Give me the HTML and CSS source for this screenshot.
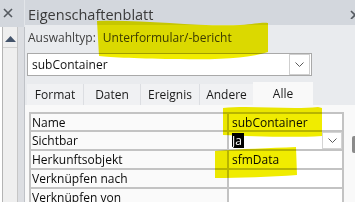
FILE: index.html
```html
<!DOCTYPE html>
<html lang="de">
<head>
<meta charset="utf-8">
<title>Eigenschaftenblatt</title>
<link rel="stylesheet" href="styles.css">
</head>
<body>
<div class="app">
  <div class="side">
    <div class="side-title">
      <svg class="x-icon" width="10" height="10" viewBox="0 0 10 10"><path d="M1 1 L9 9 M9 1 L1 9" stroke="#555a60" stroke-width="1.6" fill="none"/></svg>
    </div>
    <div class="side-body">
      <div class="side-edge"></div>
      <div class="vscroll">
        <div class="vs-btn">
          <svg width="11" height="6" viewBox="0 0 11 6"><path d="M0 6 L5.5 0 L11 6 Z" fill="#44546b"/></svg>
        </div>
      </div>
      <div class="side-gap"></div>
    </div>
  </div>
  <div class="sheet">
    <div class="titlebar">
      <span>Eigenschaftenblatt</span>
      <svg class="close" width="8" height="9" viewBox="0 0 8 9"><path d="M1 1 L9 9 M9 1 L1 9" stroke="#555a60" stroke-width="1.6" fill="none"/></svg>
    </div>
    <div class="seltype"><span>Auswahltyp:</span><span>Unterformular/-bericht</span></div>
    <div class="combo">
      <span>subContainer</span>
      <span class="drop"><svg width="9" height="5" viewBox="0 0 9 5"><polyline points="0.5,0.5 4.5,4.5 8.5,0.5" stroke="#5a5a5a" stroke-width="1" fill="none"/></svg></span>
    </div>
    <div class="tabs">
      <div class="tab w1">Format</div>
      <div class="tab w2">Daten</div>
      <div class="tab w3">Ereignis</div>
      <div class="tab w4">Andere</div>
      <div class="tab active w5">Alle</div>
    </div>
    <div class="content">
      <div class="grid">
        <div class="k">Name</div><div class="v">subContainer</div>
        <div class="k">Sichtbar</div>
        <div class="v sel"><span class="hl">Ja</span><span class="cdrop"><svg width="9" height="5" viewBox="0 0 9 5"><polyline points="0.5,0.5 4.5,4.5 8.5,0.5" stroke="#5a5a5a" stroke-width="1" fill="none"/></svg></span></div>
        <div class="k">Herkunftsobjekt</div><div class="v">sfmData</div>
        <div class="k">Verknüpfen nach</div><div class="v"></div>
        <div class="k">Verknüpfen von</div><div class="v"></div>
      </div>
      <div class="rscroll"></div>
    </div>
  </div>
</div>
<svg class="marks" width="355" height="202" viewBox="0 0 355 202">
  <path d="M97 21 C140 19 200 27 240 25 C255 24 262 22 268 23 L268 52 C250 58 220 60 180 59 C140 59 110 57 99 56 Z" fill="#f0ec00"/>
  <path d="M223 108 C250 105 290 110 318 107 L322 108 L322 136 C290 138 250 136 223 135 Z" fill="#f0ec00"/>
  <path d="M215 151 C240 149 270 148 296 147 L297 175 C270 177 240 178 215 178 Z" fill="#f0ec00"/>
</svg>
</body>
</html>
```
FILE: styles.css
```css
* { box-sizing: border-box; margin: 0; padding: 0; }
html, body { width: 355px; height: 202px; overflow: hidden; }
body {
  font-family: "Open Sans", "Noto Sans", sans-serif;
  font-size: 12px;
  color: #1a1a1a;
  background: #e9ebee;
  position: relative;
}
.app { display: flex; height: 202px; }

.side { width: 25px; flex: none; display: flex; flex-direction: column; }
.side-title { height: 27px; background: #d3d7dd; padding: 8px 0 0 3px; border-right: 1px solid #e2e5e9; }
.x-icon { display: block; }
.side-body { flex: 1; display: flex; }
.side-edge { width: 2px; background: #ffffff; }
.vscroll { width: 16px; background: #efefef; border-left: 1px solid #b4b4b4; border-right: 1px solid #c6c6c6; }
.vs-btn { height: 21px; border-bottom: 1px solid #d2d2d2; display: flex; justify-content: center; padding-top: 9px; }
.vs-btn svg { display: block; }
.side-gap { width: 7px; background: #dcdee2; border-right: 1px solid #bfc2c7; }

.sheet { flex: 1; min-width: 0; display: flex; flex-direction: column; }
.titlebar {
  height: 27px; background: #d3d7dd;
  display: flex; justify-content: space-between;
  padding: 5px 0 0 3px;
  font-size: 14.5px; line-height: 20px; color: #3a3a3a;
}
.close { margin-top: 5px; margin-right: -3px; flex: none; }
.seltype { height: 21px; padding: 4px 0 0 3px; line-height: 17px; display: flex; gap: 7px; color: #404040; }
.combo {
  margin: 7px 0 0 2px; width: 285px; height: 25px;
  border: 1px solid #a9a9a9; background: #ffffff;
  display: flex; align-items: center; justify-content: space-between;
  padding: 0 1px 0 4px; color: #111111;
}
.drop { width: 21px; height: 21px; border: 1px solid #cfcfcf; display: flex; align-items: center; justify-content: center; }
.drop svg, .cdrop svg { display: block; }

.tabs { display: flex; align-items: flex-end; height: 23px; margin: 6px 0 0 2px; }
.tab {
  height: 21px; padding-top: 1px; line-height: 20px; text-align: center;
  background: #f0f1f3; border-left: 1px solid #dcdee2; color: #1a1a1a;
}
.tab:first-child { border-left: none; }
.tab.active { height: 23px; line-height: 21px; background: #f9f9f9; border-left: none; }
.w1 { width: 56px; }
.w2 { width: 57px; }
.w3 { width: 59px; }
.w4 { width: 54px; }
.w5 { width: 60px; }

.content { flex: 1; background: #f9f9f9; display: flex; padding: 7px 0 0 4px; }
.grid {
  align-self: flex-start;
  display: grid;
  grid-template-columns: 196px 113px;
  grid-template-rows: 16px 17px 17px 17px 17px;
  gap: 2px; padding: 2px;
  background: #c3c3c3; width: 315px;
}
.k, .v { display: flex; align-items: center; white-space: nowrap; overflow: hidden; color: #0a0a0a; }
.k { background: #fafafa; padding-left: 1px; }
.v { background: #ffffff; padding-left: 3px; }
.v.sel { align-items: stretch; justify-content: space-between; }
.hl { background: #000000; color: #ffffff; margin: 1px 0; padding: 0 1px 0 0; min-width: 12px; display: flex; align-items: center; }
.cdrop { width: 20px; border: 1px solid #d4d4d4; background: #ffffff; display: flex; align-items: center; justify-content: center; }
.rscroll { margin-left: auto; margin-top: 24px; width: 3px; height: 17px; background: #8a8a8a; border-radius: 2px 0 0 2px; }

.marks { position: absolute; left: 0; top: 0; pointer-events: none; mix-blend-mode: multiply; }
```
